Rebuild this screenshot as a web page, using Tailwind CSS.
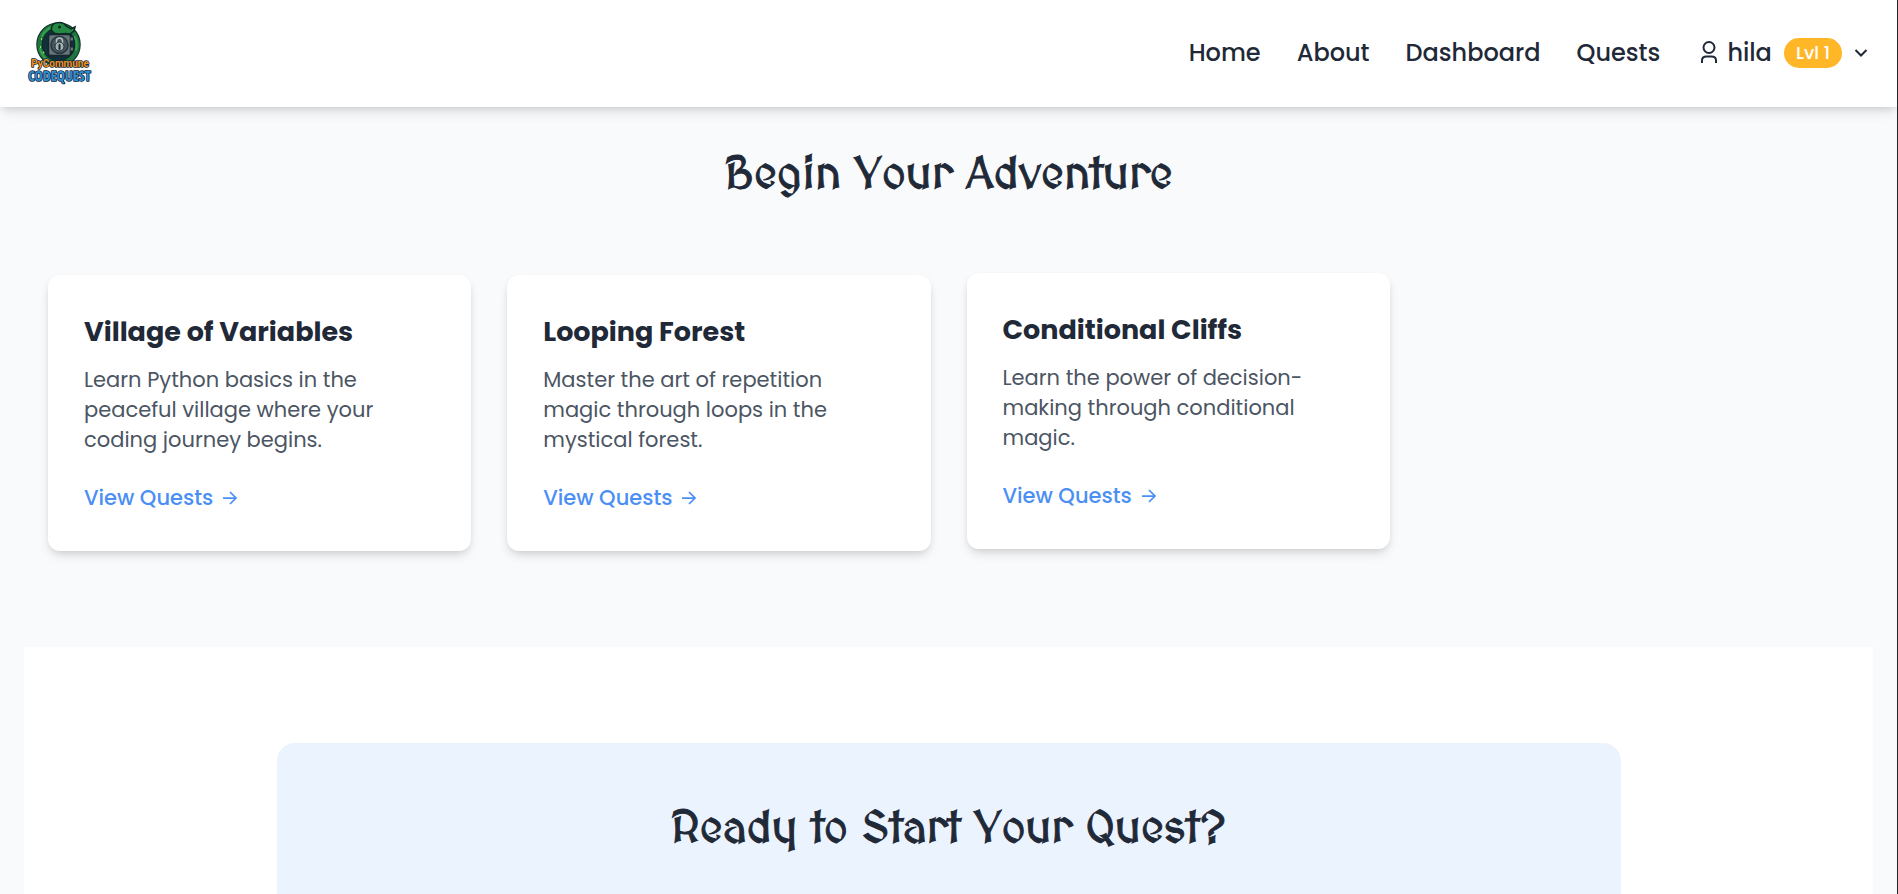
<!DOCTYPE html>
<html lang="en">
<head>
<meta charset="utf-8">
<meta name="viewport" content="width=device-width, initial-scale=1">
<title>PyCommune CodeQuest</title>
<script src="https://cdn.jsdelivr.net/npm/@tailwindcss/browser@4"></script>
</head>
<body class="min-h-screen overflow-x-hidden border-r border-[#222428] bg-[#f9fafc] font-['Poppins','Inter',sans-serif] text-[#1f2937]">
<header class="relative flex h-[107px] items-center justify-between bg-white pr-[29px] pb-0.5 pl-6 shadow-[0_6px_12px_-2px_rgba(0,0,0,0.12),0_3px_7px_-2px_rgba(0,0,0,0.1)]">
  <a href="#" aria-label="PyCommune CodeQuest" class="block">
    <svg class="size-[72px]" viewBox="0 0 72 72" fill="none">
      <circle cx="34.500" cy="27.500" r="18" fill="#12303a"/>
      <circle cx="34.500" cy="27.500" r="19" stroke="#0d2a25" stroke-width="6.500"/>
      <circle cx="34.500" cy="27.500" r="19" stroke="#1f7440" stroke-width="4.500"/>
      <path d="M18 19a19 19 0 0 1 10-9M16 32a19 19 0 0 0 5 9M51 20a19 19 0 0 1 1 13" stroke="#37a04c" stroke-width="2" stroke-linecap="round"/>
      <path d="M28 9c2-4 11-5 14 0l5 3 4-2-1 4-4 3c-5-1-7 0-12 0-5 0-8-4-6-8Z" fill="#268a45" stroke="#0d2a25" stroke-width="1.500"/>
      <circle cx="35.500" cy="10" r="1.500" fill="#10291d"/>
      <path d="M17 22h1M16 30h1M19 36l1-1" stroke="#a6d65c" stroke-width="2"/>
      <rect x="24.500" y="17.500" width="22" height="21" rx="2" fill="#66757a" stroke="#17262c" stroke-width="1.500"/>
      <path d="M46.500 20h3v4h-3M46.500 30h3v4h-3" fill="#66757a" stroke="#17262c"/>
      <circle cx="35.500" cy="28" r="8.500" fill="#46565c" stroke="#26363c" stroke-width="1.500"/>
      <path d="M32.500 26.500V24a3 3 0 0 1 6 0v2.500" stroke="#b4c0c0" stroke-width="1.500"/>
      <circle cx="35.500" cy="29.500" r="4.500" fill="#a5b1b1" stroke="#203036"/>
      <path d="M35.500 28v4" stroke="#17262c" stroke-width="2" stroke-linecap="round"/>
      <g font-weight="700" text-anchor="middle" stroke="#10233c" stroke-width="1.500" stroke-linejoin="round" paint-order="stroke">
        <text x="36" y="50" font-family="Roboto, sans-serif" font-size="10" fill="#ee9420">PyCommune</text>
        <text x="35.500" y="64" font-family="Open Sans Condensed, Roboto Condensed, Roboto, sans-serif" font-size="14" fill="#2c8ed0">CODEQUEST</text>
      </g>
    </svg>
  </a>
  <nav aria-label="Main" class="flex items-center gap-9 text-2xl font-medium">
    <a href="#">Home</a>
    <a href="#">About</a>
    <a href="#">Dashboard</a>
    <a href="#">Quests</a>
    <button type="button" class="flex items-center">
      <svg class="ml-1 h-6 w-[18px]" viewBox="0 0 18 24" fill="none" stroke="currentColor" stroke-width="2"><circle cx="9" cy="6.500" r="5.500"/><path d="M2 22v-2.500C2 17 4 15.500 6.500 15.500h5c2.500 0 4.500 1.500 4.500 4V22"/></svg>
      <span class="ml-[9px]">hila</span>
      <span class="ml-3 flex h-[30px] items-center rounded-full bg-[#ffb627] px-3 text-[18px] text-white">Lvl 1</span>
      <svg class="ml-3 h-3 w-3.5" viewBox="0 0 14 12" fill="none" stroke="currentColor" stroke-width="2"><path d="m1.500 3 5.500 5.500L12.500 3"/></svg>
    </button>
  </nav>
</header>
<main class="px-6">
  <section class="px-6 pt-[39px] pb-24">
    <h1 class="pb-[69px] text-center font-['MedievalSharp','Lato',serif] text-[45px] leading-[60px] font-bold [-webkit-text-stroke:1px]">Begin Your Adventure</h1>
    <div class="grid grid-cols-4 gap-9">
      <article class="rounded-xl bg-white p-9 shadow-[0_6px_12px_-2px_rgba(0,0,0,0.12),0_3px_7px_-2px_rgba(0,0,0,0.1)]">
        <h2 class="mb-3 text-[27px] leading-[42px] font-bold">Village of Variables</h2>
        <p class="mb-7 text-[21px] leading-[30px] text-[#4b5563]">Learn Python basics in the peaceful village where your coding journey begins.</p>
        <a href="#" class="mb-0.5 flex items-center gap-[9px] text-[21px] leading-[30px] font-medium text-[#4b8ff5]">View Quests <svg class="size-4" viewBox="0 0 16 16" fill="none" stroke="currentColor" stroke-width="1.750"><path d="M1 8h13M8 2l6 6-6 6"/></svg></a>
      </article>
      <article class="rounded-xl bg-white p-9 shadow-[0_6px_12px_-2px_rgba(0,0,0,0.12),0_3px_7px_-2px_rgba(0,0,0,0.1)]">
        <h2 class="mb-3 text-[27px] leading-[42px] font-bold">Looping Forest</h2>
        <p class="mb-7 text-[21px] leading-[30px] text-[#4b5563]">Master the art of repetition magic through loops in the mystical forest.</p>
        <a href="#" class="mb-0.5 flex items-center gap-[9px] text-[21px] leading-[30px] font-medium text-[#4b8ff5]">View Quests <svg class="size-4" viewBox="0 0 16 16" fill="none" stroke="currentColor" stroke-width="1.750"><path d="M1 8h13M8 2l6 6-6 6"/></svg></a>
      </article>
      <article class="-translate-y-0.5 rounded-xl bg-white p-9 shadow-[0_6px_12px_-2px_rgba(0,0,0,0.12),0_3px_7px_-2px_rgba(0,0,0,0.1)]">
        <h2 class="mb-3 text-[27px] leading-[42px] font-bold">Conditional Cliffs</h2>
        <p class="mb-7 text-[21px] leading-[30px] text-[#4b5563]">Learn the power of decision-making through conditional magic.</p>
        <a href="#" class="mb-0.5 flex items-center gap-[9px] text-[21px] leading-[30px] font-medium text-[#4b8ff5]">View Quests <svg class="size-4" viewBox="0 0 16 16" fill="none" stroke="currentColor" stroke-width="1.750"><path d="M1 8h13M8 2l6 6-6 6"/></svg></a>
      </article>
    </div>
  </section>
  <section class="bg-white px-6 pt-24">
    <div class="mx-auto max-w-[1344px] rounded-t-[18px] bg-[#ebf3fe] px-9 pt-[57px] pb-9">
      <h2 class="text-center font-['MedievalSharp','Lato',serif] text-[45px] leading-[60px] font-bold [-webkit-text-stroke:1px]">Ready to Start Your Quest?</h2>
    </div>
  </section>
</main>
</body>
</html>
